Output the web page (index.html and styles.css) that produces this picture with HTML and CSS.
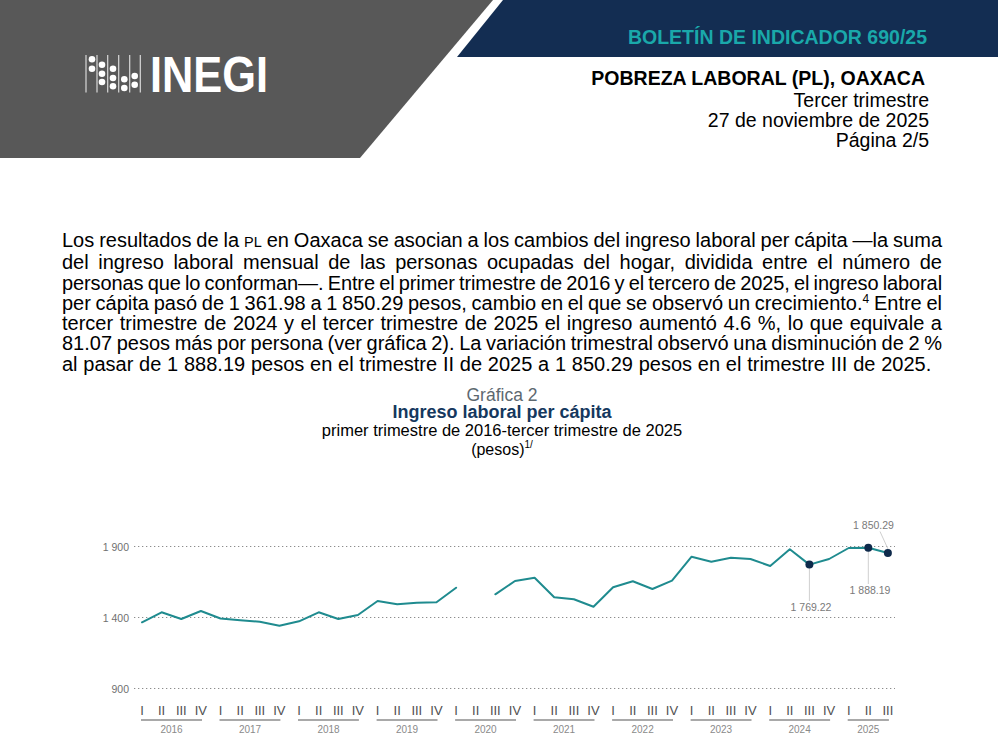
FILE: index.html
```html
<!DOCTYPE html>
<html lang="es">
<head>
<meta charset="utf-8">
<title>Pobreza laboral (PL), Oaxaca</title>
<link rel="stylesheet" href="styles.css">
</head>
<body>
<header class="top">
  <div class="slab">
    <svg class="logo" width="200" height="50" viewBox="0 0 200 50" aria-label="INEGI">
      <g class="logo-rules">
        <line x1="6" y1="5" x2="6" y2="42.5"/>
        <line x1="17" y1="5" x2="17" y2="42.5"/>
        <line x1="27.7" y1="5" x2="27.7" y2="42.5"/>
        <line x1="38.7" y1="5" x2="38.7" y2="42.5"/>
        <line x1="49.7" y1="5" x2="49.7" y2="42.5"/>
        <line x1="60.3" y1="5" x2="60.3" y2="42.5"/>
      </g>
      <g class="logo-dots">
        <circle cx="12" cy="9.3" r="3.3"/><circle cx="12" cy="18.7" r="3.3"/>
        <circle cx="22" cy="14.7" r="3.3"/><circle cx="22" cy="23.7" r="3.3"/><circle cx="22" cy="32" r="3.3"/>
        <circle cx="33" cy="18.7" r="3.3"/><circle cx="33" cy="28" r="3.3"/><circle cx="33" cy="36.3" r="3.3"/>
        <circle cx="44.3" cy="29.3" r="3.3"/><circle cx="44.3" cy="38" r="3.3"/>
        <circle cx="54.7" cy="26" r="3.3"/><circle cx="54.7" cy="34.7" r="3.3"/>
      </g>
      <text class="logo-word" x="70" y="42" textLength="118" lengthAdjust="spacingAndGlyphs">INEGI</text>
    </svg>
  </div>
  <div class="head-right">
    <div class="band"><span class="bulletin">BOLETÍN DE INDICADOR 690/25</span></div>
    <div class="titles">
      <div class="t-main">POBREZA LABORAL (PL), OAXACA</div>
      <div>Tercer trimestre</div>
      <div>27 de noviembre de 2025</div>
      <div>Página 2/5</div>
    </div>
  </div>
</header>

<p class="lead">
  <span class="ln">Los resultados de la <span class="sc">PL</span> en Oaxaca se asocian a los cambios del ingreso laboral per cápita —la suma</span>
  <span class="ln">del ingreso laboral mensual de las personas ocupadas del hogar, dividida entre el número de</span>
  <span class="ln tight">personas que lo conforman—. Entre el primer trimestre de 2016 y el tercero de 2025, el ingreso laboral</span>
  <span class="ln">per cápita pasó de 1 361.98 a 1 850.29 pesos, cambio en el que se observó un crecimiento.<sup class="fn">4</sup> Entre el</span>
  <span class="ln">tercer trimestre de 2024 y el tercer trimestre de 2025 el ingreso aumentó 4.6 %, lo que equivale a</span>
  <span class="ln">81.07 pesos más por persona (ver gráfica 2). La variación trimestral observó una disminución de 2 %</span>
  <span class="ln last">al pasar de 1 888.19 pesos en el trimestre II de 2025 a 1 850.29 pesos en el trimestre III de 2025.</span>
</p>

<section class="chart">
  <div class="chart-head">
    <div class="g-num">Gráfica 2</div>
    <div class="g-title">Ingreso laboral per cápita</div>
    <div class="g-sub">primer trimestre de 2016-tercer trimestre de 2025</div>
    <div class="g-unit">(pesos)<span class="g-sup">1/</span></div>
  </div>
  <svg class="plot" width="998" height="295" viewBox="0 461 998 295">
    <g class="grid">
      <line x1="134" y1="547.5" x2="895" y2="547.5"/>
      <line x1="134" y1="618.5" x2="895" y2="618.5"/>
      <line x1="134" y1="689.5" x2="895" y2="689.5"/>
    </g>
    <g class="ytick">
      <text x="129" y="551.5">1 900</text>
      <text x="129" y="622.5">1 400</text>
      <text x="129" y="693.5">900</text>
    </g>
    <polyline class="series" points="142,623.3 161.6,613.3 181.3,620 200.9,612 220.5,619.5 240.2,621.3 259.8,622.7 279.4,626.7 299,622.3 318.7,613.3 338.3,620 357.9,616 377.6,602 397.2,605.3 416.8,603.7 436.5,603.3 456.1,588.7"/>
    <polyline class="series" points="495.3,595.3 515,582 534.6,578.7 554.2,598.3 573.9,600.3 593.5,607.7 613.1,588.3 632.8,582.3 652.4,590 672,581.7 691.6,557.7 711.3,562.7 730.9,558.7 750.5,560 770.2,567 789.8,550.3 809.4,565.6 829.1,560 848.7,549 868.3,548.7 887.9,554"/>
    <g class="leader">
      <line x1="809.4" y1="569" x2="809.4" y2="602"/>
      <line x1="868.3" y1="552" x2="868.3" y2="585"/>
      <line x1="880" y1="532.5" x2="888" y2="550"/>
    </g>
    <g class="marker">
      <circle cx="809.4" cy="565.6" r="4"/>
      <circle cx="868.3" cy="548.7" r="4"/>
      <circle cx="887.9" cy="554" r="4"/>
    </g>
    <g class="note">
      <text x="811" y="612">1 769.22</text>
      <text x="870" y="595">1 888.19</text>
      <text x="873.5" y="529.5">1 850.29</text>
    </g>
    <g class="qtr">
      <text x="142" y="716">I</text><text x="161.6" y="716">II</text><text x="181.3" y="716">III</text><text x="200.9" y="716">IV</text>
      <text x="220.5" y="716">I</text><text x="240.2" y="716">II</text><text x="259.8" y="716">III</text><text x="279.4" y="716">IV</text>
      <text x="299" y="716">I</text><text x="318.7" y="716">II</text><text x="338.3" y="716">III</text><text x="357.9" y="716">IV</text>
      <text x="377.6" y="716">I</text><text x="397.2" y="716">II</text><text x="416.8" y="716">III</text><text x="436.5" y="716">IV</text>
      <text x="456.1" y="716">I</text><text x="475.7" y="716">II</text><text x="495.3" y="716">III</text><text x="515" y="716">IV</text>
      <text x="534.6" y="716">I</text><text x="554.2" y="716">II</text><text x="573.9" y="716">III</text><text x="593.5" y="716">IV</text>
      <text x="613.1" y="716">I</text><text x="632.8" y="716">II</text><text x="652.4" y="716">III</text><text x="672" y="716">IV</text>
      <text x="691.6" y="716">I</text><text x="711.3" y="716">II</text><text x="730.9" y="716">III</text><text x="750.5" y="716">IV</text>
      <text x="770.2" y="716">I</text><text x="789.8" y="716">II</text><text x="809.4" y="716">III</text><text x="829.1" y="716">IV</text>
      <text x="848.7" y="716">I</text><text x="868.3" y="716">II</text><text x="887.9" y="716">III</text>
    </g>
    <g class="yearline">
      <line x1="141" y1="721" x2="202" y2="721"/>
      <line x1="219.5" y1="721" x2="280.4" y2="721"/>
      <line x1="298" y1="721" x2="358.9" y2="721"/>
      <line x1="376.6" y1="721" x2="437.5" y2="721"/>
      <line x1="455.1" y1="721" x2="516" y2="721"/>
      <line x1="533.6" y1="721" x2="594.5" y2="721"/>
      <line x1="612.1" y1="721" x2="673" y2="721"/>
      <line x1="690.6" y1="721" x2="751.5" y2="721"/>
      <line x1="769.2" y1="721" x2="830.1" y2="721"/>
      <line x1="847.7" y1="721" x2="888.9" y2="721"/>
    </g>
    <g class="year">
      <text x="171.5" y="734">2016</text>
      <text x="250" y="734">2017</text>
      <text x="328.5" y="734">2018</text>
      <text x="407" y="734">2019</text>
      <text x="485.5" y="734">2020</text>
      <text x="564" y="734">2021</text>
      <text x="642.6" y="734">2022</text>
      <text x="721" y="734">2023</text>
      <text x="799.6" y="734">2024</text>
      <text x="868.3" y="734">2025</text>
    </g>
  </svg>
</section>
</body>
</html>
```

FILE: styles.css
```css
html, body {
  margin: 0;
  padding: 0;
  background: #ffffff;
}

body {
  width: 998px;
  height: 755px;
  overflow: hidden;
  font-family: "Liberation Sans", Arial, sans-serif;
  color: #000;
}

/* ---------- header ---------- */
.top {
  display: grid;
  height: 158px;
}

.slab,
.head-right {
  grid-area: 1 / 1;
}

.slab {
  background: #585858;
  clip-path: polygon(0 0, 493px 0, 360px 158px, 0 158px);
  padding: 50px 0 0 80px;
}

.logo {
  display: block;
  overflow: visible;
}

.logo-rules line {
  stroke: #d9d9d9;
  stroke-width: 1.2;
}

.logo-dots circle {
  fill: #ffffff;
}

.logo-word {
  font-family: "Liberation Sans", Arial, sans-serif;
  font-weight: 700;
  font-size: 50px;
  fill: #ffffff;
}

.head-right {
  display: flex;
  flex-direction: column;
}

.band {
  box-sizing: border-box;
  height: 57px;
  background: #132d52;
  clip-path: polygon(503px 0, 100% 0, 100% 100%, 457px 100%);
  padding: 27px 71px 0 0;
  text-align: right;
  line-height: 20px;
}

.bulletin {
  color: #1aa8aa;
  font-weight: 700;
  font-size: 19.5px;
}

.titles {
  margin-top: 10px;
  padding-right: 69px;
  text-align: right;
  font-size: 19.5px;
  line-height: 20px;
}

.t-main {
  font-weight: 700;
  line-height: 22.5px;
  padding-right: 4px;
}

/* ---------- body text ---------- */
.lead {
  box-sizing: border-box;
  height: 142px;
  margin: 72px 0 0 0;
  padding: 0 56px 0 62px;
  font-size: 20px;
  line-height: 20.3px;
}

.ln {
  display: block;
  text-align: justify;
  text-align-last: justify;
  word-spacing: -2.5px;
}

.ln.tight {
  word-spacing: -3.5px;
  letter-spacing: -0.1px;
}

.ln.last {
  text-align-last: left;
  word-spacing: 0.2px;
}

.sc {
  font-size: 14.5px;
}

.fn {
  font-size: 12px;
  line-height: 0;
  vertical-align: 7px;
}

/* ---------- chart ---------- */
.chart-head {
  box-sizing: border-box;
  height: 73px;
  margin-top: 14.5px;
  padding: 0 56px 0 62px;
  text-align: center;
}

.g-num {
  font-size: 17.5px;
  line-height: 17px;
  color: #5d6870;
}

.g-title {
  font-size: 18px;
  line-height: 17px;
  font-weight: 700;
  color: #15385e;
}

.g-sub {
  font-size: 16.5px;
  line-height: 19px;
}

.g-unit {
  font-size: 16px;
  line-height: 20px;
}

.g-sup {
  font-size: 10px;
  line-height: 0;
  vertical-align: 7px;
}

.plot {
  display: block;
  font-family: "Liberation Sans", Arial, sans-serif;
}

.grid line {
  stroke: #8c8c8c;
  stroke-width: 1;
  stroke-dasharray: 1.3 2.7;
}

.ytick text {
  font-size: 10.5px;
  fill: #707070;
  text-anchor: end;
}

.series {
  fill: none;
  stroke: #1f8b8f;
  stroke-width: 2;
  stroke-linejoin: round;
  stroke-linecap: round;
}

.leader line {
  stroke: #cfcfcf;
  stroke-width: 1;
}

.marker circle {
  fill: #0e2a4b;
}

.note text {
  font-size: 10.5px;
  fill: #7a7a7a;
  text-anchor: middle;
}

.qtr text {
  font-size: 13px;
  fill: #505050;
  text-anchor: middle;
}

.yearline line {
  stroke: #555555;
  stroke-width: 1.2;
}

.year text {
  font-size: 10px;
  fill: #8a8a8a;
  text-anchor: middle;
}
```
